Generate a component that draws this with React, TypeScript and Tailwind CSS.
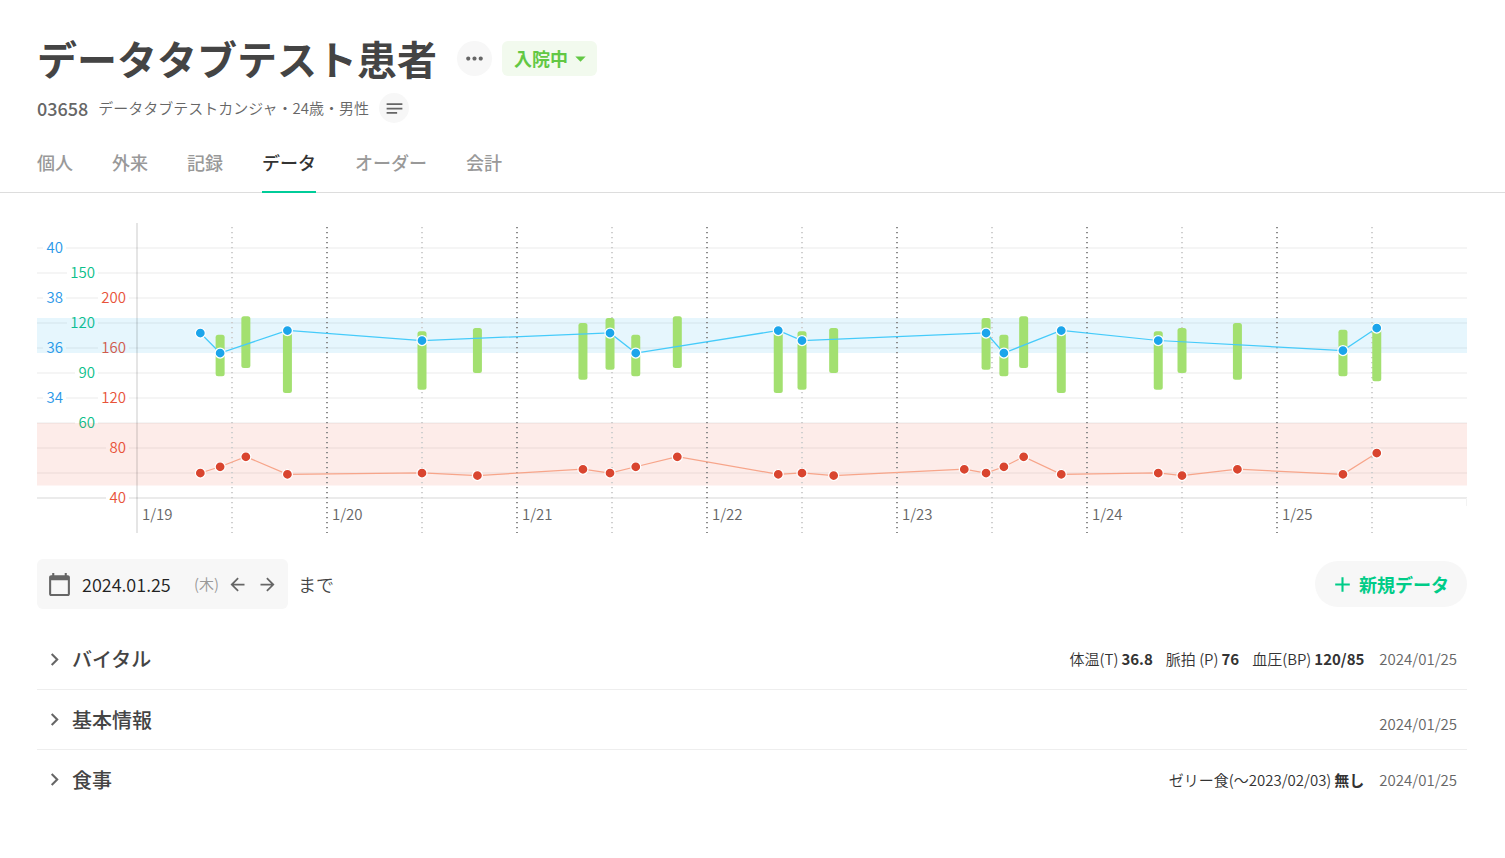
import { useLayoutEffect, useRef, useState } from "react";
import {
    MdAdd,
    MdArrowBack,
    MdArrowDropDown,
    MdArrowForward,
    MdCalendarToday,
    MdChevronRight,
    MdMoreHoriz,
    MdNotes,
} from "react-icons/md";

type Vital = {
    day: number;
    hour: number;
    temp?: number;
    pulse: number;
    bp?: [number, number];
};

type Section = {
    title: string;
    items: { label: string; value: string }[];
    date: string;
};

const tabs = ["個人", "外来", "記録", "データ", "オーダー", "会計"];

const days = ["1/19", "1/20", "1/21", "1/22", "1/23", "1/24", "1/25"];

const vitals: Vital[] = [
    { day: 0, hour: 8, temp: 36.6, pulse: 60 },
    { day: 0, hour: 10.5, temp: 35.8, pulse: 65, bp: [113, 88] },
    { day: 0, hour: 13.75, pulse: 73, bp: [124, 93] },
    { day: 0, hour: 19, temp: 36.7, pulse: 59, bp: [115, 78] },
    { day: 1, hour: 12, temp: 36.3, pulse: 60, bp: [115, 80] },
    { day: 1, hour: 19, pulse: 58, bp: [117, 90] },
    { day: 2, hour: 8.33, pulse: 63, bp: [120, 86] },
    { day: 2, hour: 11.75, temp: 36.6, pulse: 60, bp: [123, 92] },
    { day: 2, hour: 15, temp: 35.8, pulse: 65, bp: [113, 88] },
    { day: 2, hour: 20.25, pulse: 73, bp: [124, 93] },
    { day: 3, hour: 9, temp: 36.7, pulse: 59, bp: [115, 78] },
    { day: 3, hour: 12, temp: 36.3, pulse: 60, bp: [115, 80] },
    { day: 3, hour: 16, pulse: 58, bp: [117, 90] },
    { day: 4, hour: 8.5, pulse: 63 },
    { day: 4, hour: 11.25, temp: 36.6, pulse: 60, bp: [123, 92] },
    { day: 4, hour: 13.5, temp: 35.8, pulse: 65, bp: [113, 88] },
    { day: 4, hour: 16, pulse: 73, bp: [124, 93] },
    { day: 4, hour: 20.75, temp: 36.7, pulse: 59, bp: [115, 78] },
    { day: 5, hour: 9, temp: 36.3, pulse: 60, bp: [115, 80] },
    { day: 5, hour: 12, pulse: 58, bp: [117, 90] },
    { day: 5, hour: 19, pulse: 63, bp: [120, 86] },
    { day: 6, hour: 8.33, temp: 35.9, pulse: 59, bp: [116, 88] },
    { day: 6, hour: 12.6, temp: 36.8, pulse: 76, bp: [120, 85] },
];

const sections: Section[] = [
    {
        title: "バイタル",
        items: [
            { label: "体温(T)", value: "36.8" },
            { label: "脈拍 (P)", value: "76" },
            { label: "血圧(BP)", value: "120/85" },
        ],
        date: "2024/01/25",
    },
    { title: "基本情報", items: [], date: "2024/01/25" },
    {
        title: "食事",
        items: [{ label: "ゼリー食(〜2023/02/03)", value: "無し" }],
        date: "2024/01/25",
    },
];

// chart geometry, in px from the top left of the svg
const CHART_HEIGHT = 310;
const AXIS_X = 100;
const GRID_TOP = 25;
const GRID_STEP = 25;
const GRID_BOTTOM = GRID_TOP + GRID_STEP * 10;

const tempY = (t: number) => GRID_TOP + (40 - t) * 25;
const bpY = (v: number) => GRID_TOP + 25 + ((150 - v) * 5) / 3;
const pulseY = (p: number) => GRID_TOP + 50 + (200 - p) * 1.25;

const axisLabels = [
    ...[40, 38, 36, 34].map((v) => ({ v, x: 26, y: tempY(v), color: "#2b98e8" })),
    ...[150, 120, 90, 60].map((v) => ({ v, x: 58, y: bpY(v), color: "#0cc08a" })),
    ...[200, 160, 120, 80, 40].map((v) => ({ v, x: 89, y: pulseY(v), color: "#e8533a" })),
];

const VitalChart = () => {
    const ref = useRef<HTMLDivElement>(null);
    const [width, setWidth] = useState(1430);

    useLayoutEffect(() => {
        const el = ref.current;
        if (!el) return;
        const update = () => setWidth(el.clientWidth);
        update();
        const observer = new ResizeObserver(update);
        observer.observe(el);
        return () => observer.disconnect();
    }, []);

    const dayWidth = (width - AXIS_X) / days.length;
    const timeX = (v: Vital) => AXIS_X + (v.day + v.hour / 24) * dayWidth;

    const temps = vitals.filter((v) => v.temp !== undefined);

    return (
        <div ref={ref} className="w-full">
            <svg
                width={width}
                height={CHART_HEIGHT}
                className="block text-[15px] font-[350]"
                role="img"
                aria-label="バイタル"
            >
                {Array.from({ length: 11 }, (_, i) => (
                    <line
                        key={i}
                        x1={0}
                        x2={width}
                        y1={GRID_TOP + GRID_STEP * i}
                        y2={GRID_TOP + GRID_STEP * i}
                        stroke={i === 10 ? "#ebebeb" : "#f5f5f5"}
                        strokeWidth={2}
                    />
                ))}
                {axisLabels.map(({ v, x, y, color }) => {
                    const w = String(v).length * 8 + 7;
                    return (
                        <g key={`${x}-${v}`}>
                            <rect x={x - w + 3} y={y - 8} width={w} height={16} fill="#fff" />
                            <text x={x} y={y + 5} textAnchor="end" fill={color}>
                                {v}
                            </text>
                        </g>
                    );
                })}

                <rect x={0} y={tempY(37.2)} width={width} height={35} fill="#0aa6f0" fillOpacity={0.1} />
                <rect x={0} y={pulseY(100)} width={width} height={62.5} fill="#e8432a" fillOpacity={0.1} />

                <line x1={AXIS_X} x2={AXIS_X} y1={0} y2={CHART_HEIGHT} stroke="#000" strokeOpacity={0.1} strokeWidth={2} />
                {days.map((day, i) => {
                    const x = AXIS_X + dayWidth * i;
                    const noon = x + dayWidth / 2;
                    return (
                        <g key={day}>
                            {i > 0 && (
                                <line x1={x} x2={x} y1={4} y2={CHART_HEIGHT} stroke="#8c8c8c" strokeWidth={2} strokeDasharray="1.3 3.7" />
                            )}
                            <line x1={noon} x2={noon} y1={4} y2={CHART_HEIGHT} stroke="#cfcfcf" strokeWidth={2} strokeDasharray="1.3 3.7" />
                            <text x={x + 5} y={297} fill="#666">
                                {day}
                            </text>
                        </g>
                    );
                })}
                <line x1={width - 0.5} x2={width - 0.5} y1={GRID_BOTTOM} y2={GRID_BOTTOM + 8} stroke="#f3f3f3" />

                {vitals.map((v, i) =>
                    v.bp ? (
                        <rect
                            key={i}
                            x={timeX(v) - 4.5}
                            y={bpY(v.bp[0])}
                            width={9}
                            height={bpY(v.bp[1]) - bpY(v.bp[0])}
                            rx={2.5}
                            fill="#a3e070"
                        />
                    ) : null
                )}

                <polyline
                    points={temps.map((v) => `${timeX(v)},${tempY(v.temp!)}`).join(" ")}
                    fill="none"
                    stroke="#45cbfa"
                    strokeWidth={1.25}
                />
                {temps.map((v, i) => (
                    <circle key={i} cx={timeX(v)} cy={tempY(v.temp!)} r={5} fill="#1ba5eb" stroke="#fff" strokeWidth={1.25} />
                ))}

                <polyline
                    points={vitals.map((v) => `${timeX(v)},${pulseY(v.pulse)}`).join(" ")}
                    fill="none"
                    stroke="#f7a58a"
                    strokeWidth={1.25}
                />
                {vitals.map((v, i) => (
                    <circle key={i} cx={timeX(v)} cy={pulseY(v.pulse)} r={5} fill="#d9452f" stroke="#fff" strokeWidth={1.25} />
                ))}
            </svg>
        </div>
    );
};

const Header = () => (
    <header>
        <div className="px-[37px] pt-7">
            <div className="flex items-center">
                <h1 className="text-[40px] leading-[60px] font-bold text-[#444]">データタブテスト患者</h1>
                <button
                    type="button"
                    aria-label="メニュー"
                    className="ml-5 flex size-[35px] items-center justify-center rounded-full bg-[#f7f7f7] text-[#666]"
                >
                    <MdMoreHoriz size={25} />
                </button>
                <button
                    type="button"
                    className="ml-[10px] flex h-[35px] items-center rounded-md bg-[#f2faee] pr-1 pl-3 text-[18px] leading-[26px] font-bold text-[#62c844]"
                >
                    入院中
                    <MdArrowDropDown size={25} />
                </button>
            </div>
            <div className="mt-[5px] flex h-[30px] items-center text-[15px] font-[350] text-[#666]">
                <span className="text-[18px] leading-[26px] font-medium">03658</span>
                <span className="ml-[10px]">データタブテストカンジャ・24歳・男性</span>
                <button
                    type="button"
                    aria-label="メモ"
                    className="ml-[10px] flex size-[30px] items-center justify-center rounded-full bg-[#f7f7f7]"
                >
                    <MdNotes size={21} />
                </button>
            </div>
        </div>
        <nav className="mt-[11px] flex gap-[39px] border-b border-[#ddd] px-[37px]">
            {tabs.map((tab) => (
                <a
                    key={tab}
                    href="#"
                    className={
                        tab === "データ"
                            ? "-mb-px flex h-[59px] items-center border-b-2 border-[#0c9] text-[18px] font-medium text-[#333]"
                            : "-mb-px flex h-[59px] items-center border-b-2 border-transparent text-[18px] font-medium text-[#999]"
                    }
                >
                    {tab}
                </a>
            ))}
        </nav>
    </header>
);

const DateBar = () => (
    <div className="mt-[26px] flex items-center justify-between">
        <div className="flex items-center text-[18px] leading-[26px] font-[350] text-[#444]">
            <div className="flex h-[50px] items-center rounded-md bg-[#f7f7f7] px-[10px]">
                <MdCalendarToday size={25} className="text-[#666]" />
                <input
                    type="text"
                    aria-label="日付"
                    defaultValue="2024.01.25"
                    className="ml-[10px] w-[112px] bg-transparent text-[#222] outline-none"
                />
                <span className="text-[15px] text-[#999]">(木)</span>
                <button type="button" aria-label="前の日" className="ml-2 text-[#666]">
                    <MdArrowBack size={21} />
                </button>
                <button type="button" aria-label="次の日" className="ml-[9px] text-[#666]">
                    <MdArrowForward size={21} />
                </button>
            </div>
            <span className="ml-[10px]">まで</span>
        </div>
        <button
            type="button"
            className="flex h-[46px] items-center gap-1 rounded-full bg-[#f7f7f7] pr-[18px] pl-[15px] text-[18px] leading-[26px] font-bold text-[#0c8]"
        >
            <MdAdd size={25} />
            新規データ
        </button>
    </div>
);

const SectionRow = ({ title, items, date }: Section) => (
    <li className="flex h-[60px] items-center justify-between border-t border-[#eee] pr-[10px] first:border-t-0">
        <button type="button" className="flex items-center gap-[5px] pl-[5px] text-[20px] font-medium text-[#444]">
            <MdChevronRight size={25} className="text-[#666]" />
            {title}
        </button>
        <div className="text-[15px] leading-6 font-[350] text-[#666]">
            <span className="inline-flex min-h-[26px] items-center gap-[13px] text-[#333]">
                {items.map((item) => (
                    <span key={item.label}>
                        {item.label}
                        <b className="ml-[3px] font-bold">{item.value}</b>
                    </span>
                ))}
            </span>
            <time className="ml-[15px]">{date}</time>
        </div>
    </li>
);

const App = () => {
    return (
        <div className="min-h-screen bg-white font-['Noto_Sans_CJK_JP',sans-serif]">
            <Header />
            <main className="pt-[30px] pr-[38px] pb-10 pl-[37px]">
                <VitalChart />
                <DateBar />
                <ul className="mt-5">
                    {sections.map((section) => (
                        <SectionRow key={section.title} {...section} />
                    ))}
                </ul>
            </main>
        </div>
    );
};

export default App;
